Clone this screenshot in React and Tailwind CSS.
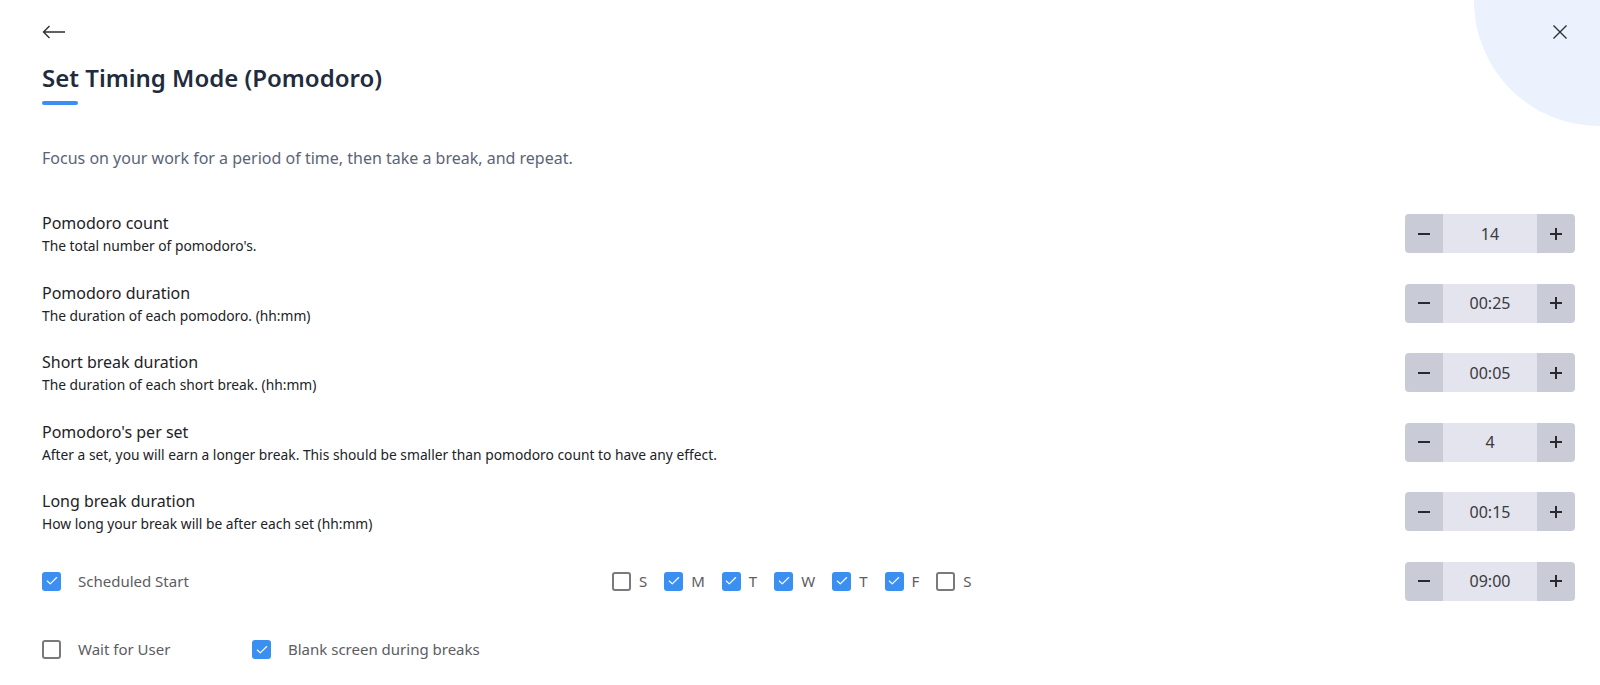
import { Check } from 'lucide-react';

const rows = [
  { label: 'Pomodoro count', hint: "The total number of pomodoro's.", value: '14' },
  { label: 'Pomodoro duration', hint: 'The duration of each pomodoro. (hh:mm)', value: '00:25' },
  { label: 'Short break duration', hint: 'The duration of each short break. (hh:mm)', value: '00:05' },
  {
    label: "Pomodoro's per set",
    hint: 'After a set, you will earn a longer break. This should be smaller than pomodoro count to have any effect.',
    value: '4'
  },
  { label: 'Long break duration', hint: 'How long your break will be after each set (hh:mm)', value: '00:15' }
];

const days = [
  { d: 'S', on: false },
  { d: 'M', on: true },
  { d: 'T', on: true },
  { d: 'W', on: true },
  { d: 'T', on: true },
  { d: 'F', on: true },
  { d: 'S', on: false }
];

const Box = ({ on }) =>
  on ? (
    <span className="w-[19px] h-[19px] rounded-[3px] bg-[#3b8ff0] flex items-center justify-center shrink-0">
      <Check className="w-[14px] h-[14px] text-white" strokeWidth={2} />
    </span>
  ) : (
    <span className="w-[19px] h-[19px] rounded-[3px] border-2 border-[#7a7a7e] bg-white shrink-0" />
  );

const Stepper = ({ value }) => (
  <div className="flex w-[170px] h-[39px] rounded-[4px] overflow-hidden">
    <button className="w-[38px] bg-[#c9ccd7] flex items-center justify-center">
      <span className="w-[12px] h-[2px] bg-[#2a2a2e]" />
    </button>
    <div className="flex-1 bg-[#e3e4ed] flex items-center justify-center text-[16px] text-[#3a3a40]">
      {value}
    </div>
    <button className="w-[38px] bg-[#c9ccd7] flex items-center justify-center relative">
      <span className="w-[12px] h-[2px] bg-[#2a2a2e]" />
      <span className="absolute w-[2px] h-[12px] bg-[#2a2a2e]" />
    </button>
  </div>
);

export default function App() {
  return (
    <div
      className="relative w-full h-[685px] overflow-hidden bg-white pl-[42px] pr-[25px]"
      style={{ fontFamily: '"Noto Sans", sans-serif' }}
    >
      {/* decorative corner circle */}
      <div className="absolute left-[1474px] top-[-124px] w-[250px] h-[250px] rounded-full bg-[#ebf2fd]" />

      {/* header */}
      <div className="relative flex items-center justify-between h-[20px] mt-[22px]">
        <svg width="24" height="14" viewBox="0 0 24 14" fill="none" stroke="#2e2e33" strokeWidth="1.4">
          <path d="M23 7H1.5M7.5 1L1.5 7l6 6" />
        </svg>
        <svg width="16" height="16" viewBox="0 0 16 16" fill="none" stroke="#2e2e33" strokeWidth="1.4" className="mr-[7px]">
          <path d="M1.5 1.5l13 13M14.5 1.5l-13 13" />
        </svg>
      </div>

      <h1 className="relative mt-[20px] text-[24px] leading-[32px] font-semibold text-[#1f2c3d]">
        Set Timing Mode (Pomodoro)
      </h1>
      <div className="w-[36px] h-[4px] rounded-full bg-[#3b8ff0] mt-[7px]" />

      <p className="mt-[41px] text-[16px] leading-[24px] text-[#5b6477]">
        Focus on your work for a period of time, then take a break, and repeat.
      </p>

      <div className="mt-[29px] flex flex-col">
        {rows.map((r) => (
          <div key={r.label} className="flex items-center justify-between h-[69.5px]">
            <div>
              <div className="text-[16px] leading-[22px] text-[#222226]">{r.label}</div>
              <div className="text-[13.8px] leading-[18px] text-[#222226] mt-[3px]">{r.hint}</div>
            </div>
            <Stepper value={r.value} />
          </div>
        ))}

        <div className="flex items-center h-[69px]">
          <div className="flex items-center gap-[17px] w-[570px]">
            <Box on />
            <span className="text-[15px] text-[#5c5c62]">Scheduled Start</span>
          </div>
          <div className="flex items-center gap-[17px]">
            {days.map((x, i) => (
              <div key={i} className="flex items-center gap-[8px]">
                <Box on={x.on} />
                <span className="text-[15px] text-[#5c5c62]">{x.d}</span>
              </div>
            ))}
          </div>
          <div className="ml-auto">
            <Stepper value="09:00" />
          </div>
        </div>

        <div className="flex items-center h-[68px]">
          <div className="flex items-center gap-[17px] w-[210px]">
            <Box on={false} />
            <span className="text-[15px] text-[#5c5c62]">Wait for User</span>
          </div>
          <div className="flex items-center gap-[17px]">
            <Box on />
            <span className="text-[15px] text-[#5c5c62]">Blank screen during breaks</span>
          </div>
        </div>
      </div>
    </div>
  );
}
